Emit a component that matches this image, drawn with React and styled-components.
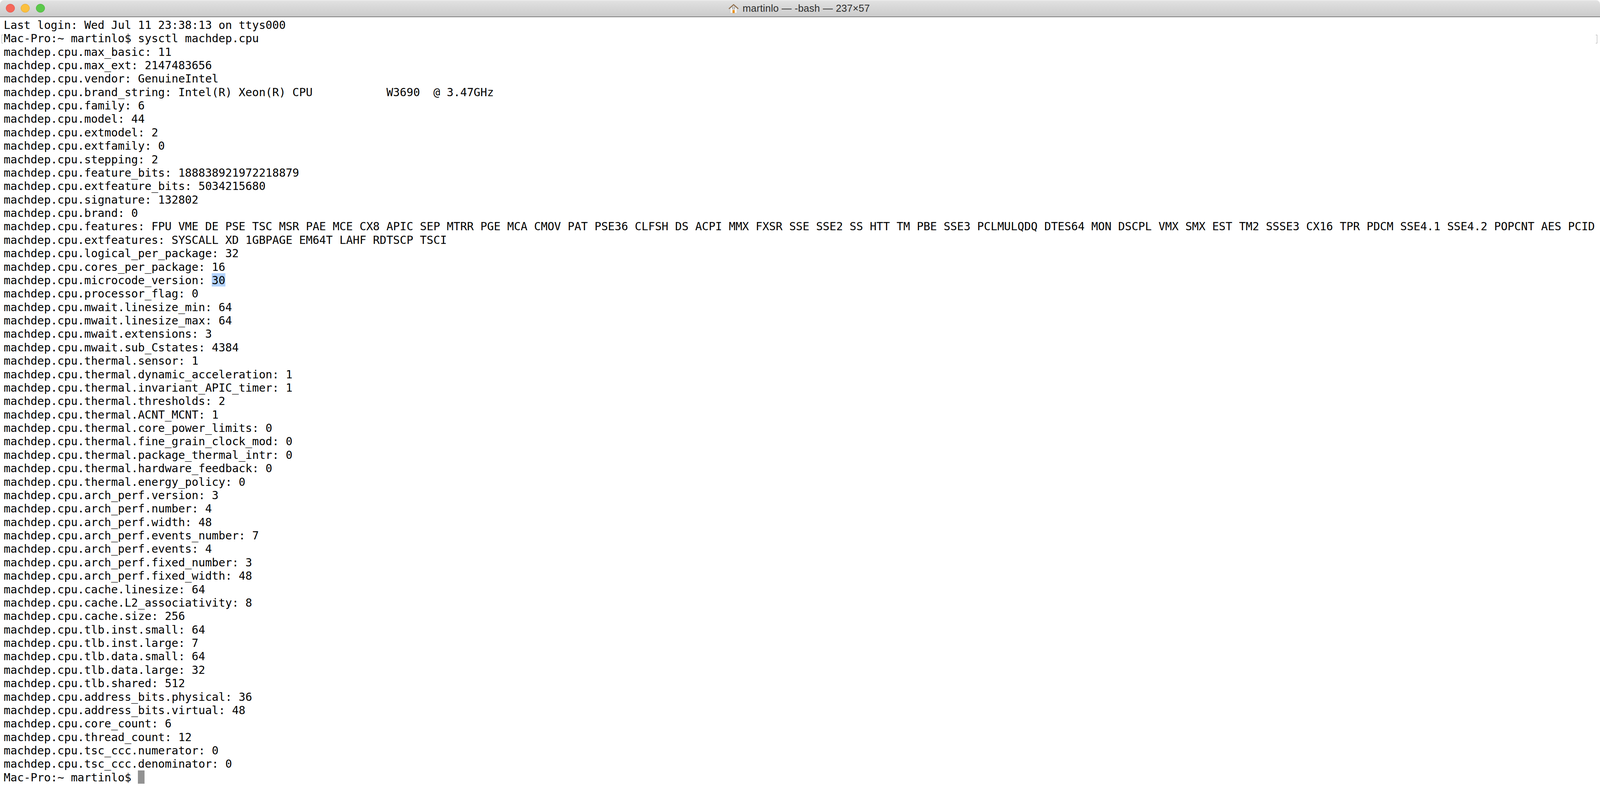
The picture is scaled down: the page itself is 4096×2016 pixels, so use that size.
import styled, { createGlobalStyle } from 'styled-components';

const GlobalStyle = createGlobalStyle`
  html, body {
    margin: 0;
    padding: 0;
    background: #fff;
    overflow: hidden;
  }
`;

const lines = [
  'Last login: Wed Jul 11 23:38:13 on ttys000',
  'Mac-Pro:~ martinlo$ sysctl machdep.cpu',
  'machdep.cpu.max_basic: 11',
  'machdep.cpu.max_ext: 2147483656',
  'machdep.cpu.vendor: GenuineIntel',
  'machdep.cpu.brand_string: Intel(R) Xeon(R) CPU           W3690  @ 3.47GHz',
  'machdep.cpu.family: 6',
  'machdep.cpu.model: 44',
  'machdep.cpu.extmodel: 2',
  'machdep.cpu.extfamily: 0',
  'machdep.cpu.stepping: 2',
  'machdep.cpu.feature_bits: 188838921972218879',
  'machdep.cpu.extfeature_bits: 5034215680',
  'machdep.cpu.signature: 132802',
  'machdep.cpu.brand: 0',
  'machdep.cpu.features: FPU VME DE PSE TSC MSR PAE MCE CX8 APIC SEP MTRR PGE MCA CMOV PAT PSE36 CLFSH DS ACPI MMX FXSR SSE SSE2 SS HTT TM PBE SSE3 PCLMULQDQ DTES64 MON DSCPL VMX SMX EST TM2 SSSE3 CX16 TPR PDCM SSE4.1 SSE4.2 POPCNT AES PCID',
  'machdep.cpu.extfeatures: SYSCALL XD 1GBPAGE EM64T LAHF RDTSCP TSCI',
  'machdep.cpu.logical_per_package: 32',
  'machdep.cpu.cores_per_package: 16',
  'machdep.cpu.microcode_version: ',
  'machdep.cpu.processor_flag: 0',
  'machdep.cpu.mwait.linesize_min: 64',
  'machdep.cpu.mwait.linesize_max: 64',
  'machdep.cpu.mwait.extensions: 3',
  'machdep.cpu.mwait.sub_Cstates: 4384',
  'machdep.cpu.thermal.sensor: 1',
  'machdep.cpu.thermal.dynamic_acceleration: 1',
  'machdep.cpu.thermal.invariant_APIC_timer: 1',
  'machdep.cpu.thermal.thresholds: 2',
  'machdep.cpu.thermal.ACNT_MCNT: 1',
  'machdep.cpu.thermal.core_power_limits: 0',
  'machdep.cpu.thermal.fine_grain_clock_mod: 0',
  'machdep.cpu.thermal.package_thermal_intr: 0',
  'machdep.cpu.thermal.hardware_feedback: 0',
  'machdep.cpu.thermal.energy_policy: 0',
  'machdep.cpu.arch_perf.version: 3',
  'machdep.cpu.arch_perf.number: 4',
  'machdep.cpu.arch_perf.width: 48',
  'machdep.cpu.arch_perf.events_number: 7',
  'machdep.cpu.arch_perf.events: 4',
  'machdep.cpu.arch_perf.fixed_number: 3',
  'machdep.cpu.arch_perf.fixed_width: 48',
  'machdep.cpu.cache.linesize: 64',
  'machdep.cpu.cache.L2_associativity: 8',
  'machdep.cpu.cache.size: 256',
  'machdep.cpu.tlb.inst.small: 64',
  'machdep.cpu.tlb.inst.large: 7',
  'machdep.cpu.tlb.data.small: 64',
  'machdep.cpu.tlb.data.large: 32',
  'machdep.cpu.tlb.shared: 512',
  'machdep.cpu.address_bits.physical: 36',
  'machdep.cpu.address_bits.virtual: 48',
  'machdep.cpu.core_count: 6',
  'machdep.cpu.thread_count: 12',
  'machdep.cpu.tsc_ccc.numerator: 0',
  'machdep.cpu.tsc_ccc.denominator: 0',
];

const Window = styled.div`
  position: relative;
  width: 4096px;
  height: 2016px;
  overflow: hidden;
  background: #fff;
`;

const TitleBar = styled.header`
  height: 42px;
  display: flex;
  align-items: center;
  justify-content: center;
  position: relative;
  border-bottom: 2px solid #808080;
  border-radius: 10px 10px 0 0;
  background: linear-gradient(#e5e5e5 0, #dfdfdf 12%, #cbcbcb 100%);
  box-shadow: inset 0 1px 0 #f2f2f2;
`;

const Lights = styled.div`
  position: absolute;
  left: 15.3px;
  top: 9.5px;
  display: flex;
  gap: 15.3px;
`;

const Light = styled.span`
  width: 22.9px;
  height: 22.9px;
  border-radius: 50%;
  box-sizing: border-box;
  background: ${(p) => p.$fill};
  border: 1px solid ${(p) => p.$edge};
`;

const Title = styled.div`
  display: flex;
  align-items: center;
  gap: 10px;
  margin: 1px 0 0 -4px;
  font-family: 'Liberation Sans', Arial, sans-serif;
  font-size: 25.5px;
  letter-spacing: 0.25px;
  color: #2d2d2d;
  white-space: pre;
`;

const Screen = styled.main`
  padding: 1.84px 0 0 9.55px;
  display: flex;
  flex-direction: column;
  font-family: 'DejaVu Sans Mono', monospace;
  font-size: 28.55px;
  color: #000;
`;

/* line-height is taller than the row so the baseline sits where Menlo's does */
const Row = styled.div`
  height: 34.38px;
  line-height: 37.8px;
  white-space: pre;
`;

const Selected = styled.span`
  display: inline-block;
  height: 34.38px;
  vertical-align: top;
  background: #b3d3fd;
`;

const Cursor = styled.span`
  display: inline-block;
  width: 17.2px;
  height: 34.38px;
  vertical-align: top;
  background: #929292;
`;

const Mark = styled.span`
  position: absolute;
  top: 88.5px;
  width: 4px;
  height: 22px;
  box-sizing: border-box;
  border: 1.5px solid #a6a6a6;
  ${(p) => (p.$right ? 'right: 7px; border-left: 0;' : 'left: 4px; border-right: 0;')}
`;

function HomeIcon() {
  return (
    <svg width="26" height="24" viewBox="0 0 26 24">
      <path d="M4.5 11 L13 4 L21.5 11 V23.5 H4.5 Z" fill="#f6f6f6" stroke="#bdbdbd" strokeWidth="0.8" />
      <path d="M1 12.5 L13 1.8 L25 12.5" fill="none" stroke="#8d6b48" strokeWidth="2.4" />
      <rect x="10" y="8" width="6" height="5" fill="#ddd" stroke="#8a8a8a" strokeWidth="1.2" />
      <rect x="10.2" y="15.5" width="5.6" height="8" fill="#e8901c" />
    </svg>
  );
}

export default function App() {
  return (
    <Window>
      <GlobalStyle />
      <TitleBar>
        <Lights>
          <Light $fill="#f5675a" $edge="#e0524a" />
          <Light $fill="#fbc03f" $edge="#e3a52f" />
          <Light $fill="#5bc94b" $edge="#4aad3c" />
        </Lights>
        <Title>
          <HomeIcon />
          martinlo — -bash — 237×57
        </Title>
      </TitleBar>
      <Mark />
      <Mark $right />
      <Screen>
        {lines.map((line, i) => (
          <Row key={i}>
            {line}
            {i === 19 && <Selected>30</Selected>}
          </Row>
        ))}
        <Row>
          Mac-Pro:~ martinlo$ <Cursor />
        </Row>
      </Screen>
    </Window>
  );
}
